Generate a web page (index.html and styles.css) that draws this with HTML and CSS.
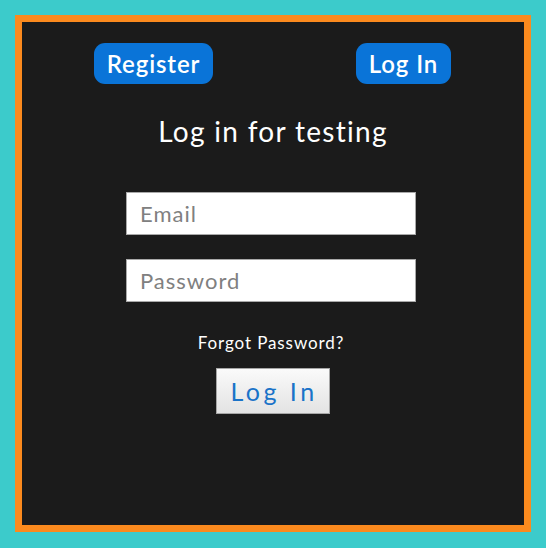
FILE: index.html
```html
<!DOCTYPE html>
<html>
<head>
<meta charset="utf-8">
<link rel="stylesheet" href="styles.css">
</head>
<body>
<div class="frame">
  <div class="panel">
    <div class="nav">
      <a class="pill pill-register">Register</a>
      <a class="pill pill-login">Log In</a>
    </div>
    <h1 class="title">Log in for testing</h1>
    <form class="form">
      <input class="field" type="text" placeholder="Email">
      <input class="field" type="password" placeholder="Password">
      <div class="forgot">Forgot Password?</div>
      <button class="submit" type="button">Log In</button>
    </form>
  </div>
</div>
</body>
</html>
```

FILE: styles.css
```css
html, body {
  margin: 0;
  padding: 0;
  background: #3ccbcb;
}
body {
  width: 546px;
  height: 548px;
  font-family: Lato, "Open Sans", sans-serif;
}
.frame {
  padding: 15px 15px 16px 15px;
  box-sizing: border-box;
  height: 548px;
}
.panel {
  border: 7px solid #fb8a1e;
  background: #1b1b1b;
  height: 503px;
  box-sizing: content-box;
  display: flex;
  flex-direction: column;
  align-items: center;
}
.nav {
  align-self: stretch;
  display: flex;
  justify-content: space-between;
  padding: 21px 73px 0 72px;
}
.pill {
  display: flex;
  align-items: center;
  justify-content: center;
  height: 41px;
  border-radius: 11px;
  background: #0a74d8;
  color: #fff;
  font-size: 24px;
  font-weight: 600;
  letter-spacing: 0.9px;
}
.pill-register { width: 119px; }
.pill-login { width: 95px; }
.title {
  margin: 30px 0 0 0;
  color: #fff;
  font-size: 28px;
  font-weight: 400;
  line-height: 34px;
  letter-spacing: 1.3px;
  text-align: center;
}
.form {
  margin: 0 4px 0 0;
  display: flex;
  flex-direction: column;
  align-items: center;
}
.field {
  margin-top: 44px;
  width: 290px;
  height: 43px;
  box-sizing: border-box;
  border: 1px solid #a9a9a9;
  background: #fff;
  padding: 0 13px;
  font-family: inherit;
  font-size: 22px;
  letter-spacing: 1px;
  color: #333;
  outline: none;
}
.field + .field { margin-top: 24px; }
.field::placeholder { color: #808080; }
.forgot {
  margin-top: 30px;
  color: #fff;
  font-size: 17px;
  line-height: 22px;
  letter-spacing: 0.9px;
}
.submit {
  margin: 14px 0 0 3px;
  width: 114px;
  height: 46px;
  border: 1px solid #a6a6a6;
  background: linear-gradient(#fafafa, #e3e3e3);
  color: #1a73c8;
  font-family: inherit;
  font-size: 25px;
  letter-spacing: 3.5px;
  padding: 0 0 0 3px;
}
```
